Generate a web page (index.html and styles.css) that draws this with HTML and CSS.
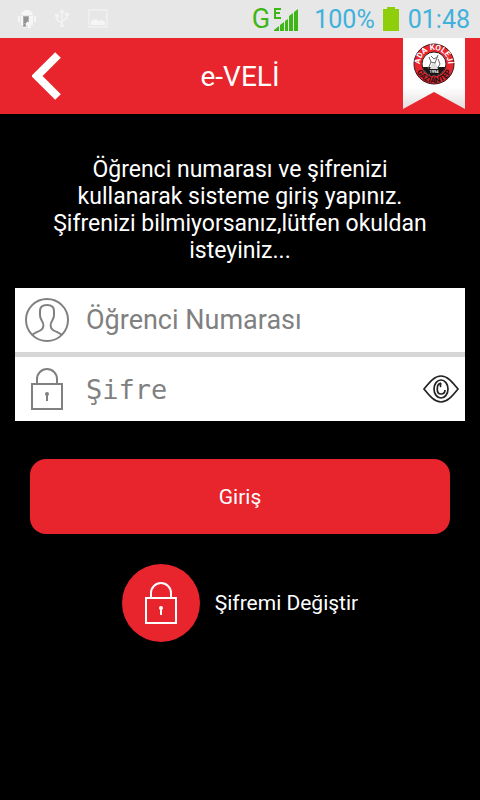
FILE: index.html
```html
<!DOCTYPE html>
<html lang="tr">
<head>
    <meta charset="utf-8">
    <meta name="viewport" content="width=device-width, initial-scale=1">
    <title>e-VELİ</title>
    <link rel="stylesheet" href="styles.css">
</head>
<body>
    <div class="status-bar">
        <div class="notifications">
            <svg width="18" height="20" viewBox="0 0 18 20">
                <path d="M3 6a6 5 0 0 1 12 0zM3 7h12v9H3zM0 7h2v6H0zM16 7h2v6h-2zM5 16h3v3H5zM10 16h3v3h-3z" fill="#f6f6f6"/>
                <path d="M5 7h6v6H8v5H5z" fill="#b0b0b0"/>
                <path d="M6 9h4M6 11h4M6 13h3M6 16h1" stroke="#777" fill="none"/>
            </svg>
            <svg width="16" height="20" viewBox="0 0 16 20" fill="none" stroke="#f3f3f3" stroke-width="1.500">
                <path d="M8 3v14M8 14l-5-3V7M8 12l5-3V5"/>
                <path d="M8 0l3 4H5zM1 5h4v3H1zM11 4h4v3h-4zM6 16h4v2H6z" fill="#f3f3f3" stroke="none"/>
            </svg>
            <svg width="20" height="20" viewBox="0 0 20 20">
                <rect x="1" y="1" width="18" height="17" fill="none" stroke="#f6f6f6"/>
                <path d="M3 16v-4l4-2 4 2 3-1 3 2v3z" fill="#f6f6f6"/>
            </svg>
        </div>
        <div class="system">
            <span class="network">G</span>
            <svg class="signal" width="26" height="24" viewBox="0 0 26 24">
                <path d="M9 2H3v9h6M3 6h5" fill="none" stroke="#3fb618" stroke-width="2"/>
                <path d="M2 24v-1l5-4v5zM8 24v-6l4-3v9zM13 24V14l3-2v12zM17 24V9l4-3v18zM22 24V5l4-3v22z" fill="#3fb618"/>
            </svg>
            <span class="battery-level">100%</span>
            <svg width="16" height="24" viewBox="0 0 16 24">
                <path d="M4 0h8v2h4v22H0V2h4z" fill="#8fce0b"/>
            </svg>
            <span class="clock">01:48</span>
        </div>
    </div>

    <header class="header">
        <button class="back" type="button" aria-label="Geri">
            <svg width="30" height="50" viewBox="0 0 30 50">
                <path d="M26 4L5 25l21 21" fill="none" stroke="#fff" stroke-width="8"/>
            </svg>
        </button>
        <h1>e-VELİ</h1>
        <svg class="ribbon" width="62" height="71" viewBox="0 0 62 71">
            <defs>
                <linearGradient id="cloth" x1="0" y1="0" x2="0" y2="1">
                    <stop offset="0.7" stop-color="#fff"/>
                    <stop offset="1" stop-color="#e3dcdc"/>
                </linearGradient>
                <path id="topArc" d="M17 26a14 14 0 0 1 28 0"/>
                <path id="bottomArc" d="M12 26a19 19 0 0 0 38 0"/>
            </defs>
            <path d="M0 0h62v71L31 54 0 71z" fill="url(#cloth)"/>
            <circle cx="31" cy="26" r="20" fill="#e8242d" stroke="#3a1a1c" stroke-width="1"/>
            <circle cx="31" cy="26" r="12" fill="#fff" stroke="#222" stroke-width="1"/>
            <path d="M19.500 29a12 12 0 0 0 23 0z" fill="#1b1515"/>
            <path d="M25 31l3-7-2-5M28 24l4 1 3-8M32 25l-2 6M35 21l2 5-3 5M28 18l3 3 3-2" fill="none" stroke="#666" stroke-width="1"/>
            <path d="M27 31l2-6 4 1 2 5z" fill="#ddd"/>
            <text class="crest-name"><textPath href="#topArc" startOffset="50%">ADA KOLEJİ</textPath></text>
            <text class="crest-city"><textPath href="#bottomArc" startOffset="50%">GAZİANTEP</textPath></text>
            <text class="crest-year" x="31" y="35">1994</text>
        </svg>
    </header>

    <main class="login">
        <p class="intro">Öğrenci numarası ve şifrenizi kullanarak sisteme giriş yapınız. Şifrenizi bilmiyorsanız,lütfen okuldan isteyiniz...</p>

        <form>
            <div class="fields">
                <div class="field">
                    <label for="studentNumber" aria-label="Öğrenci Numarası">
                        <svg width="44" height="44" viewBox="0 0 44 44" fill="none" stroke="#808080" stroke-width="2">
                            <circle cx="22" cy="22" r="21"/>
                            <path d="M7 37c2-2 6-3 9-5 3-2 3-6 1-9-1-2-2-3-2-6V13c0-4 3-6 7-6s7 2 7 6v4c0 3-1 4-2 6-2 3-2 7 1 9 3 2 7 3 9 5"/>
                        </svg>
                    </label>
                    <input type="text" id="studentNumber" placeholder="Öğrenci Numarası">
                </div>
                <div class="field">
                    <label for="password" aria-label="Şifre">
                        <svg width="44" height="44" viewBox="0 0 44 44" fill="none" stroke="#808080" stroke-width="2">
                            <path d="M7 17h30v25H7zM12 17v-5a10 10 0 0 1 20 0v5"/>
                            <path d="M22 27v7"/>
                            <circle cx="22" cy="27" r="2" fill="#808080" stroke="none"/>
                        </svg>
                    </label>
                    <input type="password" id="password" placeholder="Şifre">
                    <button class="show-password" type="button" aria-label="Şifreyi göster">
                        <svg width="36" height="30" viewBox="0 0 36 30" fill="none" stroke="#222" stroke-width="1.700">
                            <path d="M1 15C6 9 11 2 18 2s12 7 17 13c-5 6-10 13-17 13S6 21 1 15z"/>
                            <ellipse cx="18" cy="15" rx="7" ry="9"/>
                            <path d="M18 9c-5 1-5 11 0 11 2 0 4-1 4-4M18 9c-1 2-1 3 0 4"/>
                        </svg>
                    </button>
                </div>
            </div>
            <button class="submit" type="submit">Giriş</button>
        </form>

        <a class="change-password" href="#">
            <span class="lock">
                <svg width="44" height="44" viewBox="0 0 44 44" fill="none" stroke="#fff" stroke-width="2">
                    <path d="M7 17h30v25H7zM12 17v-5a10 10 0 0 1 20 0v5"/>
                    <path d="M22 27v7"/>
                    <circle cx="22" cy="27" r="2" fill="#fff" stroke="none"/>
                </svg>
            </span>
            Şifremi Değiştir
        </a>
    </main>
</body>
</html>
```
FILE: styles.css
```css
* {
    box-sizing: border-box;
}

body {
    margin: 0;
    min-height: 100vh;
    background-color: #000;
    color: #fff;
    font-family: Roboto, sans-serif;
}

svg {
    display: block;
    flex-shrink: 0;
}

button {
    padding: 0;
    border: none;
    background: none;
    color: inherit;
    font-family: inherit;
    cursor: pointer;
}

/* Phone status bar */
.status-bar {
    display: flex;
    justify-content: space-between;
    align-items: center;
    height: 38px;
    padding: 0 10px 0 18px;
    background-color: #e7e7e7;
    font-size: 25px;
}

.notifications {
    display: flex;
    align-items: center;
    gap: 18px;
}

.system {
    display: flex;
    align-items: center;
    color: #3fb1dc;
}

.network {
    color: #3fb618;
    font-size: 27px;
}

.signal {
    margin-left: 2px;
    margin-right: 16px;
}

.battery-level {
    margin-right: 8px;
}

.clock {
    margin-left: 9px;
}

/* Header */
.header {
    display: grid;
    grid-template-columns: 62px 1fr 62px;
    align-items: center;
    height: 76px;
    padding: 0 15px;
    background-color: #e8242d;
}

.back {
    padding-left: 17px;
}

.header h1 {
    margin: 0;
    font-size: 28px;
    font-weight: 400;
    text-align: center;
}

.ribbon {
    align-self: start;
}

.crest-name,
.crest-city,
.crest-year {
    fill: #fff;
    font-weight: 700;
    text-anchor: middle;
}

.crest-name,
.crest-city {
    font-size: 8px;
}

.crest-city {
    fill: #1b1515;
}

.crest-year {
    font-size: 4px;
}

/* Login form */
.login {
    padding: 42px 15px;
}

.intro {
    max-width: 400px;
    margin: 0 auto 24px;
    font-size: 23px;
    line-height: 27px;
    text-align: center;
}

.fields {
    display: flex;
    flex-direction: column;
    gap: 5px;
    background-color: #d6d6d6;
}

.field {
    display: flex;
    align-items: center;
    height: 64px;
    padding: 0 6px 0 10px;
    background-color: #fff;
}

.field input {
    flex: 1;
    min-width: 0;
    height: 100%;
    padding: 0 0 0 17px;
    border: none;
    outline: none;
    background: none;
    font-family: inherit;
    font-size: 27px;
}

.field input[type="password"] {
    font-family: "DejaVu Sans Mono", monospace;
}

.field input::placeholder {
    color: #808080;
}

.submit {
    display: block;
    width: calc(100% - 30px);
    height: 75px;
    margin: 38px auto 30px;
    border-radius: 16px;
    background-color: #e8242d;
    font-size: 21px;
}

.change-password {
    display: flex;
    justify-content: center;
    align-items: center;
    gap: 15px;
    color: #fff;
    font-size: 21px;
    text-decoration: none;
}

.lock {
    display: flex;
    justify-content: center;
    align-items: center;
    width: 78px;
    height: 78px;
    border-radius: 50%;
    background-color: #e8242d;
}
```
